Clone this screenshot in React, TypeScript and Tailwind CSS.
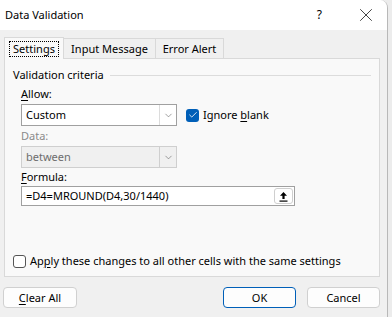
import { Check, ChevronDown, X } from 'lucide-react';

const font = { fontFamily: '"Noto Sans", "Liberation Sans", sans-serif' };

function Select({ value, disabled }: { value: string; disabled?: boolean }) {
  return (
    <div
      className={`flex h-[22px] w-[156px] items-stretch border ${
        disabled ? 'border-[#cfcfcf] bg-[#f0f0f0] text-[#6d6d6d]' : 'border-[#a0a0a0] bg-white text-black'
      }`}
    >
      <div className="flex flex-1 items-center pl-[4px]">{value}</div>
      <div className={`flex w-[17px] items-center justify-center border-l ${disabled ? 'border-[#cfcfcf]' : 'border-[#dcdcdc]'}`}>
        <ChevronDown size={11} strokeWidth={1.2} className="text-[#555]" />
      </div>
    </div>
  );
}

export default function App() {
  return (
    <div className="h-[317px] w-[392px] overflow-hidden bg-[#ececec]" style={font}>
      <div className="h-[330px] w-[388px] overflow-hidden rounded-tr-[8px] border-r border-[#b8b8b8] bg-[#f0f0f0] text-[11px] leading-[16px] text-black">
        {/* title bar */}
        <div className="flex h-[30px] items-center bg-white pl-[5px]">
          <span className="flex-1 text-[11px]">Data Validation</span>
          <span className="mr-[33px] text-[12px]">?</span>
          <X size={22} strokeWidth={0.8} className="mr-[10px]" />
        </div>

        {/* tabs */}
        <div className="flex items-end px-[4px] pt-[7px]">
          <div className="relative z-10 -mb-px flex h-[22px] w-[60px] items-center justify-center border border-b-0 border-[#d9d9d9] bg-[#f9f9f9]">
            <span className="border border-dotted border-black px-[3px] leading-[14px]">Settings</span>
          </div>
          <div className="flex h-[20px] w-[92px] items-center justify-center border border-l-0 border-b-0 border-[#d9d9d9] bg-[#f0f0f0]">
            Input Message
          </div>
          <div className="flex h-[20px] w-[68px] items-center justify-center border border-l-0 border-b-0 border-[#d9d9d9] bg-[#f0f0f0]">
            Error Alert
          </div>
        </div>

        {/* panel */}
        <div className="mx-[4px] h-[219px] w-[376px] border border-[#d9d9d9] bg-[#f9f9f9] px-[8px] pt-[8px]">
          <div className="flex items-center">
            <span>Validation criteria</span>
            <div className="ml-[6px] h-px flex-1 bg-[#dcdcdc]" />
          </div>
          <div className="pl-[8px]">
            <div className="mt-[3px]">
              <span className="underline underline-offset-2">A</span>llow:
            </div>
            <div className="mt-[2px] flex items-center">
              <Select value="Custom" />
              <div className="ml-[9px] flex h-[13px] w-[13px] items-center justify-center rounded-[3px] bg-[#005fb8]">
                <Check size={10} strokeWidth={2} className="text-white" />
              </div>
              <span className="ml-[4px]">
                Ignore <span className="underline underline-offset-2">b</span>lank
              </span>
            </div>
            <div className="mt-[2px] text-[#8a8a8a]">Data:</div>
            <div className="mt-[2px]">
              <Select value="between" disabled />
            </div>
            <div className="mt-[1px]">
              <span className="underline underline-offset-2">F</span>ormula:
            </div>
            <div className="mt-[1px] flex h-[20px] w-[274px] items-center border border-[#a0a0a0] bg-white pl-[4px]">
              <span className="flex-1">=D4=MROUND(D4,30/1440)</span>
              <div className="mr-[1px] flex h-[16px] w-[19px] items-center justify-center rounded-[3px] border border-[#cfcfcf] bg-white">
                <svg width="9" height="11" viewBox="0 0 9 11">
                  <path d="M4.5 1 L8 4.8 H5.6 V8 H3.4 V4.8 H1 Z" fill="black" />
                  <rect x="0.5" y="9.5" width="8" height="1.2" fill="black" />
                </svg>
              </div>
            </div>
          </div>

          <div className="mt-[47px] flex items-center">
            <div className="h-[13px] w-[13px] rounded-[3px] border border-[#555] bg-white" />
            <span className="ml-[4px]">
              Ap<span className="underline underline-offset-2">p</span>ly these changes to all other cells with the same settings
            </span>
          </div>
        </div>

        {/* buttons */}
        <div className="mt-[10px] flex items-center px-[3px]">
          <button className="h-[21px] w-[74px] rounded-[4px] border border-[#d0d0d0] bg-[#fdfdfd]">
            <span className="underline underline-offset-2">C</span>lear All
          </button>
          <div className="flex-1" />
          <button className="h-[21px] w-[73px] rounded-[4px] border border-[#005fb8] bg-[#fdfdfd]">OK</button>
          <button className="ml-[11px] mr-[4px] h-[21px] w-[73px] rounded-[4px] border border-[#d0d0d0] bg-[#fdfdfd]">
            Cancel
          </button>
        </div>
      </div>
    </div>
  );
}
